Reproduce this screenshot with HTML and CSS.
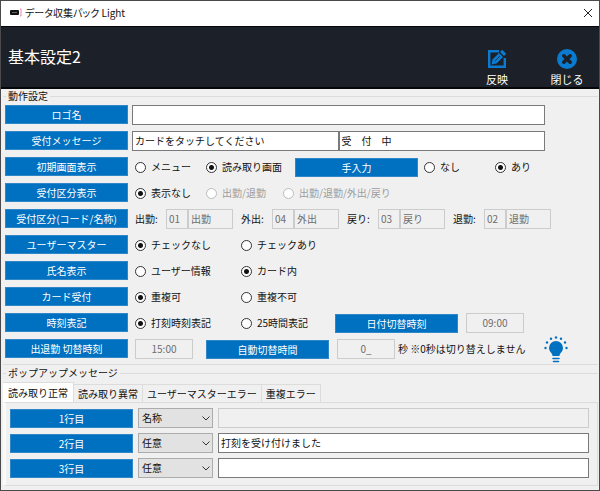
FILE: index.html
```html
<!DOCTYPE html>
<html lang="ja">
<head>
  <meta charset="UTF-8" />
  <meta name="viewport" content="width=device-width, initial-scale=1.0"/>
  <title>データ収集パック Light</title>
  <link rel="stylesheet" href="styles.css">
</head>
<body>

<div class="window">
  <div class="titlebar">
    <svg class="app-icon" viewBox="0 0 12 10">
      <rect x="0" y="2" width="9" height="5" rx="1" fill="#111"/>
      <rect x="2" y="4" width="5" height="1" fill="#666"/>
      <path d="M10 1h1v7h-1" fill="none" stroke="#e58ab8"/>
    </svg>
    <span class="app-name">データ収集パック Light</span>
    <button class="win-close" type="button" aria-label="Close">
      <svg viewBox="0 0 10 10"><path d="M1 1l8 8M9 1l-8 8" fill="none" stroke="#222" stroke-width="1"/></svg>
    </button>
  </div>

  <header>
    <h1>基本設定2</h1>
    <div class="toolbar">
      <button type="button">
        <svg viewBox="0 0 20 20">
          <path d="M12 2.200H2.200v15.600h15.600V9" fill="none" stroke="#0a7bd0" stroke-width="2.400"/>
          <path d="M4.500 15.500l1-5 6.500-6.500 4 4-6.500 6.500z" fill="#0a7bd0"/>
          <path d="M13 3l2.200-2.200 4 4L17 7z" fill="#0a7bd0"/>
          <path d="M8 12l5-5" stroke="#1c2129" stroke-width=".8"/>
        </svg>
        反映
      </button>
      <button type="button">
        <svg viewBox="0 0 20 20">
          <circle cx="10" cy="10" r="10" fill="#0a7bd0"/>
          <path d="M6.800 6.800l6.400 6.400M13.200 6.800l-6.400 6.400" stroke="#1c2129" stroke-width="3.600" stroke-linecap="round"/>
        </svg>
        閉じる
      </button>
    </div>
  </header>

  <main>
    <fieldset class="settings">
      <legend>動作設定</legend>

      <div class="row">
        <label class="tag" for="logoName">ロゴ名</label>
        <div class="fields texts"><input type="text" id="logoName"></div>
      </div>

      <div class="row">
        <label class="tag" for="message">受付メッセージ</label>
        <div class="fields texts">
          <input type="text" id="message" value="カードをタッチしてください">
          <input type="text" aria-label="受付中" value="受　付　中">
        </div>
      </div>

      <div class="row">
        <span class="tag">初期画面表示</span>
        <div class="fields">
          <label class="radio short"><input type="radio" name="firstView">メニュー</label>
          <label class="radio"><input type="radio" name="firstView" checked>読み取り画面</label>
          <span class="tag manual">手入力</span>
          <label class="radio short"><input type="radio" name="manual">なし</label>
          <label class="radio"><input type="radio" name="manual" checked>あり</label>
        </div>
      </div>

      <div class="row">
        <span class="tag">受付区分表示</span>
        <div class="fields">
          <label class="radio short"><input type="radio" name="kubun" checked>表示なし</label>
          <label class="radio middle"><input type="radio" name="kubun" disabled>出勤/退勤</label>
          <label class="radio"><input type="radio" name="kubun" disabled>出勤/退勤/外出/戻り</label>
        </div>
      </div>

      <div class="row">
        <span class="tag">受付区分(コード/名称)</span>
        <div class="fields">
          <div class="code"><label for="code1">出勤:</label><input type="text" id="code1" value="01" disabled><input type="text" aria-label="出勤 名称" value="出勤" disabled></div>
          <div class="code"><label for="code2">外出:</label><input type="text" id="code2" value="04" disabled><input type="text" aria-label="外出 名称" value="外出" disabled></div>
          <div class="code"><label for="code3">戻り:</label><input type="text" id="code3" value="03" disabled><input type="text" aria-label="戻り 名称" value="戻り" disabled></div>
          <div class="code"><label for="code4">退勤:</label><input type="text" id="code4" value="02" disabled><input type="text" aria-label="退勤 名称" value="退勤" disabled></div>
        </div>
      </div>

      <div class="row">
        <span class="tag">ユーザーマスター</span>
        <div class="fields">
          <label class="radio wide"><input type="radio" name="master" checked>チェックなし</label>
          <label class="radio"><input type="radio" name="master">チェックあり</label>
        </div>
      </div>

      <div class="row">
        <span class="tag">氏名表示</span>
        <div class="fields">
          <label class="radio wide"><input type="radio" name="fullName">ユーザー情報</label>
          <label class="radio"><input type="radio" name="fullName" checked>カード内</label>
        </div>
      </div>

      <div class="row">
        <span class="tag">カード受付</span>
        <div class="fields">
          <label class="radio wide"><input type="radio" name="card" checked>重複可</label>
          <label class="radio"><input type="radio" name="card">重複不可</label>
        </div>
      </div>

      <div class="row">
        <span class="tag">時刻表記</span>
        <div class="fields">
          <label class="radio wide"><input type="radio" name="clock" checked>打刻時刻表記</label>
          <label class="radio clock25"><input type="radio" name="clock">25時間表記</label>
          <label class="tag" for="dateSwitch">日付切替時刻</label>
          <input class="time" type="text" id="dateSwitch" value="09:00" disabled>
        </div>
      </div>

      <div class="row">
        <label class="tag" for="workSwitch">出退勤 切替時刻</label>
        <div class="fields">
          <input class="time" type="text" id="workSwitch" value="15:00" disabled>
          <label class="tag auto" for="autoSwitch">自動切替時間</label>
          <input class="time" type="text" id="autoSwitch" value="0_" disabled>
          <span class="note">秒 ※0秒は切り替えしません</span>
          <svg class="bulb" viewBox="0 0 24 27">
            <path d="M12 5a7 7 0 0 0-7 7c0 3 2 4 3 6 .4 1 .6 2 .6 2h6.800s.2-1 .6-2c1-2 3-3 3-6a7 7 0 0 0-7-7z" fill="#0070c0"/>
            <path d="M9 22.500h6M9.500 25.500h5" stroke="#0070c0" stroke-width="1.600" stroke-linecap="round"/>
            <g fill="#0070c0">
              <circle cx="12" cy="1.500" r="1.200"/>
              <circle cx="7" cy="2.800" r="1.200"/>
              <circle cx="17" cy="2.800" r="1.200"/>
              <circle cx="3" cy="6.500" r="1.200"/>
              <circle cx="21" cy="6.500" r="1.200"/>
              <circle cx="1.500" cy="12" r="1.200"/>
              <circle cx="22.500" cy="12" r="1.200"/>
            </g>
          </svg>
        </div>
      </div>
    </fieldset>

    <fieldset class="popup">
      <legend>ポップアップメッセージ</legend>
      <div class="tabs" role="tablist">
        <button class="active" type="button" role="tab" aria-selected="true">読み取り正常</button>
        <button type="button" role="tab">読み取り異常</button>
        <button type="button" role="tab">ユーザーマスターエラー</button>
        <button type="button" role="tab">重複エラー</button>
      </div>
      <div class="panel">
        <div class="line">
          <label class="tag" for="line1">1行目</label>
          <div class="select">
            <select aria-label="1行目 種別"><option>名称</option><option>任意</option></select>
            <svg viewBox="0 0 8 5"><path d="M.5 .5L4 4 7.500 .5" fill="none" stroke="#333"/></svg>
          </div>
          <input type="text" id="line1" disabled>
        </div>
        <div class="line">
          <label class="tag" for="line2">2行目</label>
          <div class="select">
            <select aria-label="2行目 種別"><option>任意</option><option>名称</option></select>
            <svg viewBox="0 0 8 5"><path d="M.5 .5L4 4 7.500 .5" fill="none" stroke="#333"/></svg>
          </div>
          <input type="text" id="line2" value="打刻を受け付けました">
        </div>
        <div class="line">
          <label class="tag" for="line3">3行目</label>
          <div class="select">
            <select aria-label="3行目 種別"><option>任意</option><option>名称</option></select>
            <svg viewBox="0 0 8 5"><path d="M.5 .5L4 4 7.500 .5" fill="none" stroke="#333"/></svg>
          </div>
          <input type="text" id="line3">
        </div>
      </div>
    </fieldset>
  </main>
</div>

</body>
</html>
```
FILE: styles.css
```css
* { box-sizing: border-box; margin: 0; padding: 0; }
body, input, select, button {
  font-family: "Noto Sans CJK JP", sans-serif;
  font-size: 10px;
  line-height: 14px;
  color: #111;
}
body { background-color: #f0f0f0; }

.window {
  display: flex;
  flex-direction: column;
  min-height: 100vh;
  border: 1px solid #4a4a4c;
}

/* title bar */
.titlebar {
  display: flex;
  align-items: center;
  height: 25px;
  padding: 0 6px 1px 9px;
  background-color: #fff;
}
.app-icon { width: 12px; height: 10px; margin-right: 3px; }
.app-name { flex: 1; font-feature-settings: "palt"; }
.win-close {
  width: 10px;
  height: 10px;
  border: none;
  background: none;
}
.win-close svg { display: block; }

/* header */
header {
  display: flex;
  justify-content: space-between;
  align-items: center;
  height: 63px;
  padding: 0 2px 2px 7px;
  background-color: #1c2129;
  border-top: 1px solid #05070a;
  border-bottom: 2px solid #05070a;
}
h1 {
  font-size: 16px;
  line-height: 24px;
  font-weight: 400;
  color: #fff;
}
.toolbar { display: flex; gap: 10px; align-self: flex-end; }
.toolbar button {
  display: flex;
  flex-direction: column;
  align-items: center;
  gap: 4px;
  width: 60px;
  border: none;
  background: none;
  color: #fff;
  font-size: 11px;
  line-height: 12px;
}
.toolbar svg { width: 20px; height: 20px; }

main { padding: 0 1px 0 2px; }

fieldset {
  border: none;
  border-top: 1px solid #dcdcdc;
  min-width: 0;
}
legend { margin-left: 3px; padding: 0 2px; }

/* blue captions */
.tag {
  flex: none;
  width: 123px;
  height: 19px;
  line-height: 17px;
  text-align: center;
  color: #fff;
  background-color: #0070c0;
  border: 1px solid #2f87c8;
}

input[type="text"] {
  height: 20px;
  padding: 0 2px 1px;
  background-color: #fff;
  border: 1px solid #7a7a7a;
  min-width: 0;
}
input[type="text"]:disabled {
  background-color: #f0f0f0;
  border-color: #ccc;
  color: #6d6d6d;
}

/* operation settings */
.settings {
  display: flex;
  flex-direction: column;
  border-bottom: 1px solid #dcdcdc;
  padding: 2px 0 5px 2px;
}
.settings legend { margin-left: 1px; }
.row {
  display: flex;
  align-items: center;
  height: 20px;
  margin-bottom: 6px;
}
.row:last-child { margin-bottom: 0; }
.row > .tag { align-self: flex-start; }
.fields {
  flex: 1;
  display: flex;
  align-items: center;
  padding-left: 7px;
}
.texts { padding-left: 4px; padding-right: 53px; }
.texts input { flex: 1; }

.radio {
  display: flex;
  align-items: center;
  gap: 5px;
  white-space: nowrap;
}
.radio input {
  appearance: none;
  width: 11px;
  height: 11px;
  border: 1px solid #333;
  border-radius: 50%;
  background-color: #fff;
}
.radio input:checked {
  background-image: radial-gradient(circle, #111 0 2px, transparent 3px);
}
.radio input:disabled { border-color: #bbb; }
.radio:has(input:disabled) { color: #9d9d9d; }
.radio.short { width: 71px; }
.radio.middle { width: 77px; }
.radio.wide { width: 106px; }
.radio.clock25 { width: 94px; }
.manual { margin: 0 6px 0 13px; }

.code {
  display: flex;
  align-items: center;
  width: 106px;
}
.code label { width: 31px; }
.code input { width: 45px; }
.code label + input { width: 22px; }

.time {
  width: 58px;
  text-align: center;
}
.tag + .time { margin-left: 8px; }
.auto { margin-left: 13px; }
.note { margin-left: 3px; white-space: nowrap; }
.bulb {
  flex: none;
  width: 24px;
  height: 27px;
  margin-left: auto;
  margin-right: 30px;
}

/* popup messages */
.popup { margin-top: 1px; }
.tabs {
  display: flex;
  align-items: flex-end;
  padding-top: 2px;
}
.tabs button {
  height: 18px;
  padding: 0 4px;
  border: 1px solid #dcdcdc;
  border-left: none;
  border-bottom: none;
  background-color: #f0f0f0;
}
.tabs .active {
  height: 20px;
  padding: 0 5px;
  background-color: #fff;
}
.panel {
  display: flex;
  flex-direction: column;
  gap: 5px;
  padding: 5px 8px 7px 4px;
  border: 1px solid #dcdcdc;
  border-left: 3px solid #fafafa;
}
.line {
  display: flex;
  align-items: center;
  gap: 5px;
}
.line > input { flex: 1; }
.select { position: relative; }
.select select {
  appearance: none;
  display: block;
  width: 75px;
  height: 20px;
  padding: 0 3px;
  border: 1px solid #acacac;
  border-radius: 0;
  background-color: #e2e2e2;
}
.select svg {
  position: absolute;
  top: 8px;
  right: 3px;
  width: 8px;
  height: 5px;
  pointer-events: none;
}
```
